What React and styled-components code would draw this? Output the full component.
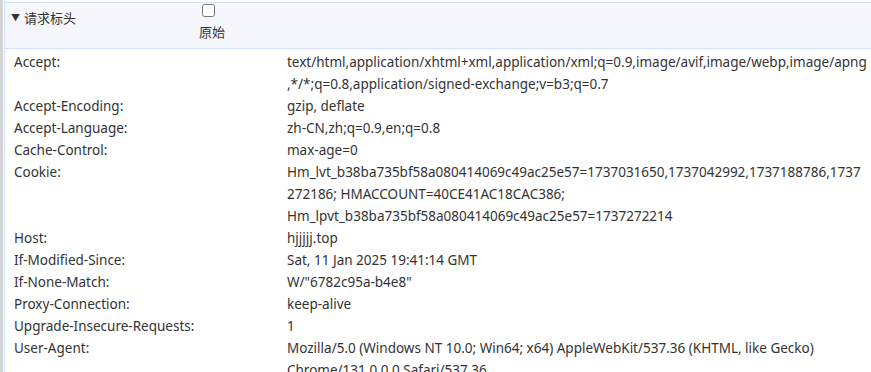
import styled, { createGlobalStyle } from 'styled-components'

const GlobalStyle = createGlobalStyle`
  * {
    box-sizing: border-box;
    margin: 0;
    padding: 0;
  }
  body {
    background: #fff;
    font-family: 'Noto Sans', 'Noto Sans CJK SC', sans-serif;
    color: #333;
    overflow: hidden;
  }
`

const Page = styled.div`
  display: flex;
  height: 372px;
`

const Gutter = styled.div`
  width: 3px;
  background: #d4d4d4;
  margin-right: 1px;
`

const Panel = styled.div`
  flex: 1;
  border-left: 1px solid #d3e3fb;
  padding-top: 2px;
  min-width: 0;
`

const Header = styled.div`
  display: flex;
  align-items: flex-start;
  height: 47px;
  background: #f5f7fc;
  border-top: 1px solid #d3e3fb;
  border-bottom: 1px solid #d3e3fb;
  padding-left: 6px;
`

const Toggle = styled.div`
  display: flex;
  align-items: center;
  gap: 4px;
  width: 188px;
  margin-top: 5px;
  font-size: 13px;
  line-height: 20px;
`

const Arrow = styled.span`
  font-size: 9px;
  line-height: 20px;
`

const RawToggle = styled.label`
  display: flex;
  flex-direction: column;
  align-items: flex-start;
  font-size: 13px;
  line-height: 18px;
  width: 34px;
`

const Box = styled.input`
  width: 13px;
  height: 13px;
  margin: 1px 0 6px 3px;
`

const Rows = styled.div`
  padding: 2px 0 0 9px;
  font-size: 13.5px;
  line-height: 22px;
`

const Row = styled.div`
  display: flex;
`

const Name = styled.div`
  width: 273px;
  flex-shrink: 0;
`

const Value = styled.div`
  display: flex;
  flex-direction: column;
`

const Line = styled.span`
  white-space: nowrap;
`

const headers = [
  ['Accept', ['text/html,application/xhtml+xml,application/xml;q=0.9,image/avif,image/webp,image/apng', ',*/*;q=0.8,application/signed-exchange;v=b3;q=0.7']],
  ['Accept-Encoding', ['gzip, deflate']],
  ['Accept-Language', ['zh-CN,zh;q=0.9,en;q=0.8']],
  ['Cache-Control', ['max-age=0']],
  ['Cookie', ['Hm_lvt_b38ba735bf58a080414069c49ac25e57=1737031650,1737042992,1737188786,1737', '272186; HMACCOUNT=40CE41AC18CAC386;', 'Hm_lpvt_b38ba735bf58a080414069c49ac25e57=1737272214']],
  ['Host', ['hjjjjj.top']],
  ['If-Modified-Since', ['Sat, 11 Jan 2025 19:41:14 GMT']],
  ['If-None-Match', ['W/"6782c95a-b4e8"']],
  ['Proxy-Connection', ['keep-alive']],
  ['Upgrade-Insecure-Requests', ['1']],
  ['User-Agent', ['Mozilla/5.0 (Windows NT 10.0; Win64; x64) AppleWebKit/537.36 (KHTML, like Gecko)', 'Chrome/131.0.0.0 Safari/537.36']],
]

const App = () => {
  return (
    <Page>
      <GlobalStyle />
      <Gutter />
      <Panel>
        <Header>
          <Toggle>
            <Arrow>▼</Arrow>
            请求标头
          </Toggle>
          <RawToggle>
            <Box type="checkbox" />
            原始
          </RawToggle>
        </Header>
        <Rows>
          {headers.map(([name, lines]) => (
            <Row key={name}>
              <Name>{name}:</Name>
              <Value>
                {lines.map((l, i) => <Line key={i}>{l}</Line>)}
              </Value>
            </Row>
          ))}
        </Rows>
      </Panel>
    </Page>
  )
}

export default App
